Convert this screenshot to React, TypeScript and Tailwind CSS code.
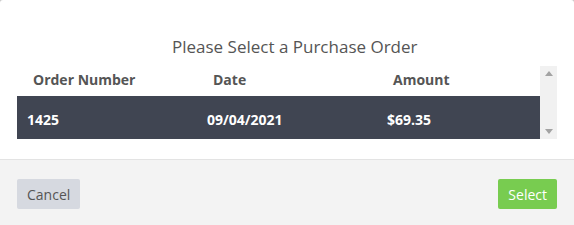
import React from "react";

export default function App() {
  return (
    <div className="w-[574px] h-[225px] bg-[#c8c8c8] overflow-hidden" style={{ fontFamily: '"Open Sans", sans-serif' }}>
      <div className="w-full h-full bg-white rounded-t-[3px] flex flex-col">
        <div className="h-[159px] flex flex-col">
          <div className="pt-[35px] h-[66px] pl-[172px] text-[17px] leading-[24px] text-[#555]">Please Select a Purchase Order</div>
          <div className="flex pl-[17px]">
            <div className="w-[523px]">
              <div className="h-[30px] pb-[3px] flex items-center text-[14px] font-bold text-[#555]">
                <div className="w-[180px] pl-[16px]">Order Number</div>
                <div className="w-[180px] pl-[16px]">Date</div>
                <div className="pl-[16px]">Amount</div>
              </div>
              <div className="h-[43px] pt-[4px] bg-[#404552] flex items-center text-[14px] font-bold text-white">
                <div className="w-[180px] pl-[10px]">1425</div>
                <div className="w-[180px] pl-[10px]">09/04/2021</div>
                <div className="pl-[10px]">$69.35</div>
              </div>
            </div>
            <div className="w-[17px] h-[73px] bg-[#f1f1f1] flex flex-col justify-between items-center py-[5px]">
              <svg width="8" height="5" viewBox="0 0 8 5"><path d="M4 0L8 5H0Z" fill="#a3a3a3" /></svg>
              <svg width="8" height="5" viewBox="0 0 8 5"><path d="M0 0H8L4 5Z" fill="#a3a3a3" /></svg>
            </div>
          </div>
        </div>
        <div className="flex-1 bg-[#f3f3f3] border-t border-[#e3e3e3] flex items-start justify-between px-[17px] pt-[19px]">
          <button className="h-[30px] px-[10px] bg-[#d6d9e0] rounded-[2px] text-[14px] text-[#555]">Cancel</button>
          <button className="h-[30px] px-[10px] bg-[#78cc50] rounded-[2px] text-[14px] text-white">Select</button>
        </div>
      </div>
    </div>
  );
}
